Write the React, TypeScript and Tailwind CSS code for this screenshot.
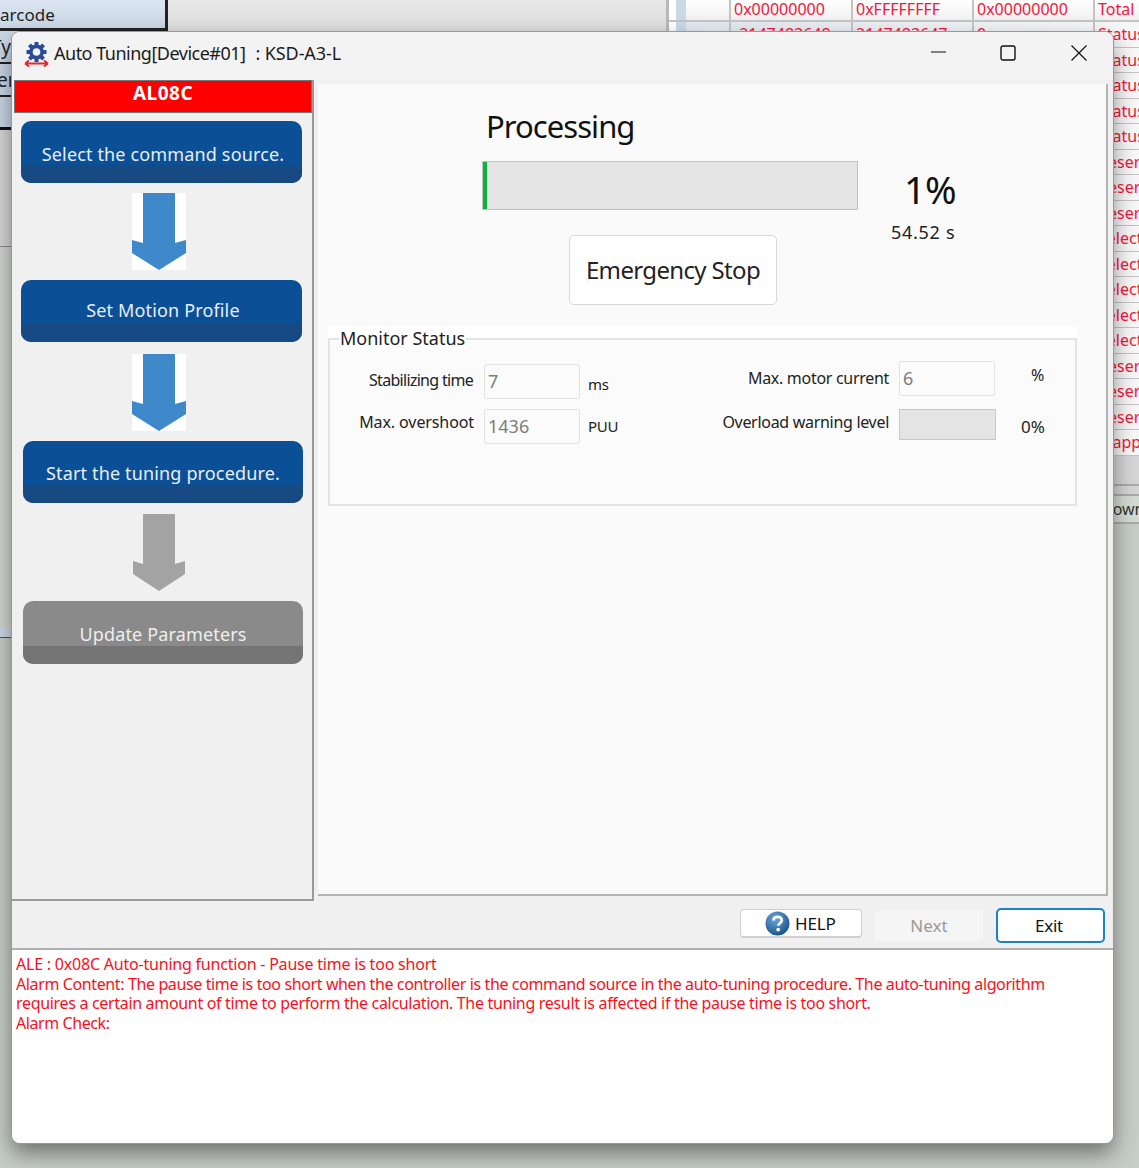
import React from "react";

const font = { fontFamily: '"Noto Sans", "Open Sans", sans-serif' };

const rightRows = ["Status","Status","Status","Status","Status","Reserved","Reserved","Reserved","Select","Select","Select","Select","Select","Reserved","Reserved","Reserved","Mapping"];

function Arrow({ color, box, narrow }: { color: string; box: boolean; narrow?: boolean }) {
  return (
    <div className={box ? "w-[54px] h-[77px] bg-white" : "w-[54px] h-[77px]"}>
      <svg width="54" height="77" viewBox="0 0 54 77">
        <polygon
          points={narrow ? "10,0 42,0 42,50 52,47 52,60 26,77 0,60 0,47 10,50" : "11,0 43,0 43,50 54,47 54,60 27,77 0,60 0,47 11,50"}
          fill={color}
        />
      </svg>
    </div>
  );
}

function Step({ label, gray, cls, top, shift, h = 62 }: { label: string; gray?: boolean; cls: string; top: string; shift?: boolean; h?: number }) {
  return (
    <div
      className={`${cls} rounded-[10px] overflow-hidden flex flex-col ${gray ? "bg-[#8a8a8a]" : "bg-[#0b4f96]"}`}
      style={{ height: h }}
    >
      <div className="flex-1 relative">
        <span className={`absolute left-0 right-0 ${top} ${shift ? "pl-[3px]" : ""} text-center text-[18px] tracking-[0.15px] leading-[24px] whitespace-nowrap ${gray ? "text-[#eeeeee]" : "text-[#e8eef6]"}`}>{label}</span>
      </div>
      <div className={`h-[18px] ${gray ? "bg-[#747474]" : "bg-[#174a82]"}`} />
    </div>
  );
}

function Input({ value }: { value: string }) {
  return (
    <div className="w-[96px] h-[35px] border border-[#e4e4e4] bg-[#fbfbfb] rounded-[2px] pl-[3px] flex items-center text-[18px] text-[#7d7d7d]">
      {value}
    </div>
  );
}

export default function App() {
  return (
    <div style={font} className="relative w-[1139px] h-[1168px] overflow-hidden bg-[#c6ccc6]">
      {/* background application */}
      <div className="flex w-full h-full">
        <div className="w-[168px] flex flex-col shrink-0">
          <div className="h-[31px] bg-gradient-to-b from-[#dbe5f1] to-[#c9d5e5] border-r-[3px] border-b-[3px] border-[#222222] text-[17px] leading-[30px] text-[#222] overflow-hidden whitespace-nowrap">
            <span className="ml-[-11px]">Barcode</span>
          </div>
          <div className="h-[33px] bg-[#c9d6e5] border-b-[2px] border-[#222] text-[19px] leading-[32px] text-[#222] overflow-hidden whitespace-nowrap"><span className="ml-[-9px]">Type</span></div>
          <div className="h-[33px] bg-[#c9d6e5] border-b-[2px] border-[#222] text-[19px] leading-[32px] text-[#222] overflow-hidden"><span className="ml-[-3px]">er</span></div>
          <div className="h-[33px] bg-[#c9d6e5] border-b-[3px] border-[#111]" />
          <div className="h-[117px] bg-[#d6d6d6] border-b border-[#888]" />
          <div className="h-[380px] bg-[#d2d4d2]" />
          <div className="h-[11px] bg-[#cdd8e6] border-b border-[#555]" />
        </div>
        <div className="w-[501px] shrink-0 bg-gradient-to-b from-[#e8e8e8] to-[#d8d8d8] h-[40px] border-r-[3px] border-[#b8b8b8]" />
        <div className="flex-1 flex flex-col min-w-0">
          <div className="flex h-[22px] border-b-[2px] border-[#c4c4c4] bg-gradient-to-b from-white to-[#f0f0f0] text-[16px] leading-[18px] text-[#f4153a]">
            <div className="w-[7px] shrink-0 bg-white" />
            <div className="w-[10px] shrink-0 bg-[#cbd8e6]" />
            <div className="w-[45px] shrink-0 border-r-[2px] border-[#c4c4c4]" />
            <div className="w-[122px] shrink-0 pl-[3px] border-r-[2px] border-[#c4c4c4]">0x00000000</div>
            <div className="w-[121px] shrink-0 pl-[3px] border-r-[2px] border-[#c4c4c4]">0xFFFFFFFF</div>
            <div className="w-[121px] shrink-0 pl-[3px] border-r-[2px] border-[#c4c4c4]">0x00000000</div>
            <div className="pl-[3px] whitespace-nowrap">Total S</div>
          </div>
          {rightRows.map((t, i) => (
            <div key={i} className="h-[25.5px] flex border-b border-[#c4c4c4] bg-gradient-to-r from-[#e2e8f0] to-[#f7f7f7] text-[16px] leading-[24px] text-[#f4153a]">
              <div className="w-[7px] shrink-0 bg-white" />
              <div className="w-[10px] shrink-0 bg-[#cbd8e6]" />
              <div className="w-[45px] shrink-0 border-r-[2px] border-[#c4c4c4]" />
              <div className="w-[122px] shrink-0 pl-[3px] border-r-[2px] border-[#c4c4c4]">{i === 0 ? "-2147483648" : ""}</div>
              <div className="w-[121px] shrink-0 pl-[3px] border-r-[2px] border-[#c4c4c4]">{i === 0 ? "2147483647" : ""}</div>
              <div className="w-[121px] shrink-0 pl-[3px] border-r-[2px] border-[#c4c4c4]">{i === 0 ? "0" : ""}</div>
              <div className="whitespace-nowrap pl-[3px]">{t}</div>
            </div>
          ))}
          <div className="h-[30px] bg-[#d5d5d5] border-b-[2px] border-[#aaaaaa]" />
          <div className="h-[10px] bg-[#d5d5d5] border-b-[2px] border-[#aaaaaa]" />
          <div className="h-[28px] flex bg-[#d3dcd3] text-[16px] leading-[26px] text-[#333] border-b-[2px] border-[#aaaaaa]">
            <div className="w-[432px] shrink-0" />
            <div>Down</div>
          </div>
        </div>
      </div>

      {/* window */}
      <div className="absolute left-[12px] top-[32px] w-[1101px] h-[1111px] rounded-[8px] overflow-hidden bg-[#f0f0f0] shadow-[0_0_0_1px_#999999,0_10px_22px_rgba(0,0,0,0.45)] flex flex-col text-[#1a1a1a]">
        {/* title bar */}
        <div className="h-[48px] shrink-0 bg-[#f3f3f3] flex items-center pl-[12px]">
          <svg width="25" height="25" viewBox="0 0 25 25" className="mr-[5px] mt-[-4px]">
            <g fill="#2b4a9b">
              <circle cx="12.5" cy="10" r="5.6" fill="none" stroke="#2b4a9b" strokeWidth="3.6" />
              {[0, 45, 90, 135, 180, 225, 270, 315].map((a) => (
                <rect key={a} x="10.5" y="0" width="4" height="4" transform={`rotate(${a} 12.5 10)`} />
              ))}
            </g>
            <path d="M1 21.5H24M1 21.5L5 18.5M1 21.5L5 24.5M24 21.5L20 18.5M24 21.5L20 24.5" stroke="#e6262c" strokeWidth="1.8" fill="none" />
          </svg>
          <span className="text-[18px] whitespace-nowrap text-[#1c1c1c] mt-[-6px] tracking-[-0.5px]">Auto Tuning[Device#01]</span>
          <span className="ml-[10px] text-[18px] whitespace-nowrap text-[#1c1c1c] mt-[-6px] tracking-[-0.1px]">: KSD-A3-L</span>
          <div className="ml-auto flex items-center mt-[-6px]">
            <svg width="16" height="16" viewBox="0 0 16 16" className="mr-[53px]"><path d="M0 7H15" stroke="#111" strokeWidth="1.2" /></svg>
            <svg width="16" height="16" viewBox="0 0 16 16" className="mr-[55px]"><rect x="1" y="1" width="14" height="14" rx="2" fill="none" stroke="#111" strokeWidth="1.4" /></svg>
            <svg width="16" height="16" viewBox="0 0 16 16" className="mr-[26px]"><path d="M0.5 0.5L15.5 15.5M15.5 0.5L0.5 15.5" stroke="#111" strokeWidth="1.2" /></svg>
          </div>
        </div>

        {/* main */}
        <div className="h-[821px] shrink-0 flex">
          <div className="w-[302px] shrink-0 h-[821px] border-r-[2px] border-b-[2px] border-[#9a9a9a] bg-[#f0f0f0] flex flex-col">
            <div className="ml-[2px] h-[33px] shrink-0 bg-[#ff0000] border-[1px] border-[#777] text-white font-bold text-[19px] tracking-[0.5px] leading-[25px] text-center">AL08C</div>
            <div className="mt-[8px]"><Step label="Select the command source." cls="ml-[9px] w-[281px]" top="top-[21px]" shift /></div>
            <div className="mt-[10px] ml-[120px]"><Arrow color="#3f88c9" box /></div>
            <div className="mt-[10px]"><Step label="Set Motion Profile" cls="ml-[9px] w-[281px]" top="top-[18px]" shift /></div>
            <div className="mt-[12px] ml-[120px]"><Arrow color="#3f88c9" box /></div>
            <div className="mt-[10px]"><Step label="Start the tuning procedure." cls="ml-[11px] w-[280px]" top="top-[20px]" /></div>
            <div className="mt-[11px] ml-[121px]"><Arrow color="#a3a3a3" box={false} narrow /></div>
            <div className="mt-[10px]"><Step label="Update Parameters" gray cls="ml-[11px] w-[280px]" top="top-[21px]" h={63} /></div>
          </div>

          <div className="ml-[4px] mt-[4px] w-[790px] h-[812px] border-r-[2px] border-b-[2px] border-[#b4b4b4] bg-[#fafafa]">
            <div className="flex h-[242px]">
              <div className="w-[164px] shrink-0" />
              <div className="w-[376px] shrink-0 flex flex-col">
                <div className="h-[77px] text-[31px] tracking-[-0.95px] leading-[40px] pt-[22px] pl-[4px] text-[#111]">Processing</div>
                <div className="h-[49px] bg-[#e4e4e4] border-[1.5px] border-[#c4c4c4] flex">
                  <div className="w-[4px] bg-[#0eb23a]" />
                </div>
                <div className="mt-[25px] ml-[87px] w-[208px] h-[70px] bg-white border-[1.5px] border-[#d8d8d8] rounded-[5px] flex items-center justify-center text-[24px] tracking-[-0.65px] text-[#222]">Emergency Stop</div>
              </div>
              <div className="flex flex-col pl-[33px]">
                <div className="mt-[83px] text-[38px] leading-[44px] text-[#111] tracking-[-0.8px] pl-[13px]">1%</div>
                <div className="mt-[9px] text-[18px] tracking-[0.7px] leading-[24px] text-[#222]">54.52 s</div>
              </div>
            </div>

            {/* Monitor status */}
            <div className="ml-[10px] w-[749px] h-[180px] bg-white pt-[12px]">
              <div className="relative h-[168px] border-[2px] border-[#e4e4e4] bg-[#fbfbfb] flex">
                <span className="absolute left-[9px] top-[-14px] bg-white text-[18px] leading-[24px] px-[1px] text-[#222]">Monitor Status</span>
                <div className="w-[479px] shrink-0 pt-[24px] flex flex-col gap-[10px]">
                  <div className="flex">
                    <div className="w-[143px] shrink-0 text-right text-[16px] tracking-[-0.7px] leading-[32px] text-[#222]">Stabilizing time</div>
                    <div className="ml-[11px]"><Input value="7" /></div>
                    <div className="ml-[8px] pt-[8px] text-[15px] tracking-[-0.3px] leading-[24px] text-[#222]">ms</div>
                  </div>
                  <div className="flex">
                    <div className="w-[144px] shrink-0 text-right text-[16px] tracking-[-0.1px] leading-[26px] text-[#222]">Max. overshoot</div>
                    <div className="ml-[10px]"><Input value="1436" /></div>
                    <div className="ml-[8px] pt-[5px] text-[15px] tracking-[-0.3px] leading-[24px] text-[#222]">PUU</div>
                  </div>
                </div>
                <div className="flex-1 pt-[21px] flex flex-col gap-[13px]">
                  <div className="flex">
                    <div className="w-[80px] shrink-0 whitespace-nowrap flex justify-end text-[16px] tracking-[-0.3px] leading-[34px] text-[#222]"><span>Max. motor current</span></div>
                    <div className="ml-[10px]"><Input value="6" /></div>
                    <div className="ml-[36px] text-[16px] leading-[28px] text-[#222]">%</div>
                  </div>
                  <div className="flex">
                    <div className="w-[80px] shrink-0 whitespace-nowrap flex justify-end text-[16px] tracking-[-0.3px] leading-[26px] text-[#222]"><span>Overload warning level</span></div>
                    <div className="ml-[10px] w-[97px] h-[31px] bg-[#e4e4e4] border border-[#c8c8c8]" />
                    <div className="ml-[25px] pt-[5px] text-[17px] leading-[26px] text-[#222]">0%</div>
                  </div>
                </div>
              </div>
            </div>
          </div>
        </div>

        {/* button bar */}
        <div className="h-[49px] shrink-0 border-b-[2px] border-[#b0b0b0] bg-[#f0f0f0] flex items-start justify-end pr-[8px] pt-[7px] text-[17px]">
          <div className="mt-[1px] w-[122px] h-[29px] pl-[24px] bg-white border border-[#cfcfcf] border-b-[2px] rounded-[4px] flex items-center text-[#111] tracking-[-0.15px]">
            <svg width="25" height="25" viewBox="0 0 25 25" className="mr-[5px] shrink-0">
              <defs>
                <radialGradient id="hb" cx="0.4" cy="0.3" r="0.8">
                  <stop offset="0" stopColor="#6ba8d8" />
                  <stop offset="1" stopColor="#0f4a80" />
                </radialGradient>
              </defs>
              <circle cx="12.5" cy="12.5" r="12" fill="url(#hb)" />
              <path d="M8.5 9.5C8.5 7 10.5 5.8 12.7 5.8C15 5.8 16.8 7.2 16.8 9.3C16.8 12 13.3 12 13.3 14.8" fill="none" stroke="#fff" strokeWidth="2.8" />
              <circle cx="13.2" cy="18.6" r="1.9" fill="#fff" />
            </svg>
            <span className="pt-[2px]">HELP</span>
          </div>
          <div className="mt-[2px] ml-[13px] w-[108px] h-[31px] bg-[#f5f5f5] rounded-[4px] flex items-center justify-center text-[#9a9a9a]">Next</div>
          <div className="ml-[13px] w-[109px] h-[35px] pr-[3px] bg-white border-[2px] border-[#1a80d0] rounded-[5px] flex items-center justify-center text-[#111] tracking-[-0.3px]">Exit</div>
        </div>

        {/* alarm text */}
        <div className="flex-1 bg-white pl-[4px] pt-[5px] text-[16px] leading-[19.7px] text-[#fa1020] whitespace-nowrap">
          <div className="tracking-[-0.21px]">ALE : 0x08C Auto-tuning function - Pause time is too short</div>
          <div className="tracking-[-0.38px]">Alarm Content: The pause time is too short when the controller is the command source in the auto-tuning procedure. The auto-tuning algorithm</div>
          <div className="tracking-[-0.32px]">requires a certain amount of time to perform the calculation. The tuning result is affected if the pause time is too short.</div>
          <div className="tracking-[-0.42px]">Alarm Check:</div>
        </div>
      </div>
    </div>
  );
}
